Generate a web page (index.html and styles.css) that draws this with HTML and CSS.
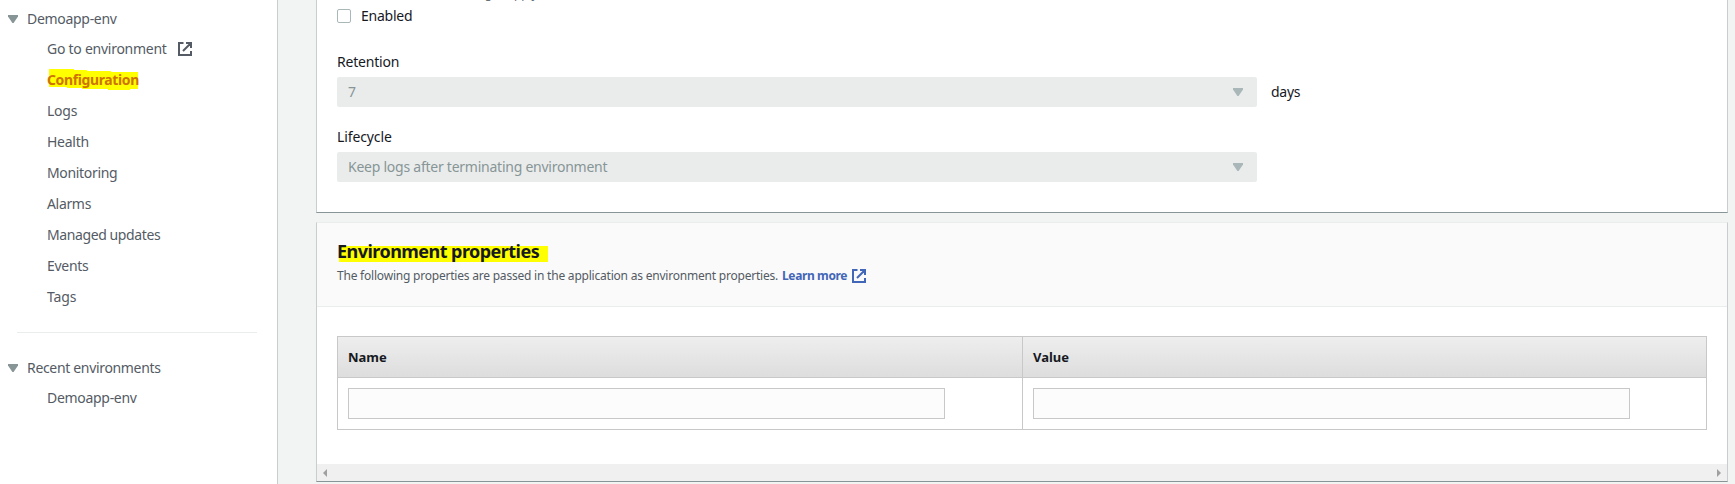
FILE: index.html
```html
<!DOCTYPE html>
<html lang="en">
<head>
<meta charset="utf-8">
<title>Configuration</title>
<link rel="stylesheet" href="styles.css">
</head>
<body>
<div class="app">
  <nav class="sidebar">
    <div class="group"><svg class="caret" viewBox="0 0 10 8"><path d="M0 0h10v1.500L5.600 8H4.400L0 1.500z"/></svg><span class="t-env">Demoapp-env</span></div>
    <ul class="links">
      <li><span class="t-goto">Go to environment</span><svg class="ext" viewBox="0 0 14 14"><path d="M5.500 1H1v12h12V9M8 1h5v5M13 1L5 9"/></svg></li>
      <li class="active"><svg class="marker" viewBox="0 0 89 21"><path d="M0 0h25v1h13v1h24v1h27v17h-8v1H59v-1H33v-1H18v-1H0z"/></svg><span class="t-conf">Configuration</span></li>
      <li><span class="t-logs">Logs</span></li>
      <li><span class="t-health">Health</span></li>
      <li><span class="t-mon">Monitoring</span></li>
      <li><span class="t-alarms">Alarms</span></li>
      <li><span class="t-managed">Managed updates</span></li>
      <li><span class="t-events">Events</span></li>
      <li><span class="t-tags">Tags</span></li>
    </ul>
    <div class="divider"></div>
    <div class="group recent"><svg class="caret" viewBox="0 0 10 8"><path d="M0 0h10v1.500L5.600 8H4.400L0 1.500z"/></svg><span class="t-recent">Recent environments</span></div>
    <ul class="links recent-links"><li><span class="t-env">Demoapp-env</span></li></ul>
  </nav>
  <main class="content">
    <section class="card logs">
      <div class="hint"><span class="t-hint">Standard CloudWatch charges apply.</span></div>
      <label class="check"><span class="box"></span><span class="t-enabled">Enabled</span></label>
      <div class="label"><span class="t-ret">Retention</span></div>
      <div class="row">
        <div class="select"><span>7</span><svg class="caret" viewBox="0 0 10 8"><path d="M0 0h10v1.500L5.600 8H4.400L0 1.500z"/></svg></div>
        <span class="t-days">days</span>
      </div>
      <div class="label second"><span class="t-life">Lifecycle</span></div>
      <div class="row">
        <div class="select"><span class="t-keep">Keep logs after terminating environment</span><svg class="caret" viewBox="0 0 10 8"><path d="M0 0h10v1.500L5.600 8H4.400L0 1.500z"/></svg></div>
      </div>
    </section>
    <section class="card props">
      <header class="head">
        <h2><span class="t-title">Environment properties</span></h2>
        <p><span class="t-desc">The following properties are passed in the application as environment properties.</span><a class="t-learn">Learn more</a><svg class="ext" viewBox="0 0 14 14"><path d="M5.500 1H1v12h12V9M8 1h5v5M13 1L5 9"/></svg></p>
      </header>
      <div class="table">
        <div class="th"><span class="t-name">Name</span></div>
        <div class="th"><span class="t-value">Value</span></div>
        <div class="td"><input class="field" type="text"></div>
        <div class="td"><input class="field" type="text"></div>
      </div>
      <div class="scroll">
        <svg viewBox="0 0 4 8"><path d="M4 0v8L0 4z"/></svg>
        <svg viewBox="0 0 4 8"><path d="M0 0v8l4-4z"/></svg>
      </div>
    </section>
  </main>
</div>
</body>
</html>
```
FILE: styles.css
```css
* { box-sizing: border-box; }
body {
  margin: 0;
  height: 484px;
  overflow: hidden;
  background: #f2f3f3;
  color: #16191f;
  font: 14px/20px "Noto Sans", "Open Sans", sans-serif;
  white-space: nowrap;
}
.app { display: flex; height: 484px; }
.sidebar {
  width: 278px;
  flex: none;
  padding-top: 9px;
  background: #fff;
  border-right: 1px solid #c8cdce;
  color: #545b64;
}
.group { display: flex; align-items: center; height: 20px; padding-left: 8px; gap: 9px; }
.caret { width: 10px; height: 8px; flex: none; fill: #879596; }
.links { list-style: none; margin: 4px 0 0; padding: 0 0 0 47px; }
.links li { position: relative; display: flex; align-items: center; height: 31px; }
.ext { width: 14px; height: 14px; flex: none; fill: none; stroke: #545b64; stroke-width: 2; }
.links .ext { margin-left: 11px; }
.active { color: #cf7300; font-weight: 700; }
.active span { position: relative; }
.marker { position: absolute; left: 2px; top: 5px; width: 89px; height: 21px; fill: #ff0; }
.divider { height: 1px; width: 240px; margin: 20px 0 0 17px; background: #eaeded; }
.recent { margin-top: 25px; }
.recent-links { margin-top: 4px; }

.content { flex: 1; padding-left: 38px; }
.card {
  width: 1412px;
  background: #fff;
  border: 1px solid #c8cdce;
  border-bottom-color: #879596;
}
.logs { height: 213px; border-top: 0; padding-left: 20px; overflow: hidden; }
.hint { height: 3px; padding-bottom: 1px; color: #687078; font-size: 12px; line-height: 16px; display: flex; align-items: flex-end; }
.check { display: flex; align-items: center; height: 26px; gap: 10px; }
.box { width: 14px; height: 14px; border: 1px solid #aab7b8; border-radius: 2px; }
.label { height: 20px; margin-top: 23px; }
.label.second { margin-top: 20px; }
.row { display: flex; align-items: center; gap: 14px; margin-top: 5px; }
.select {
  display: flex;
  align-items: center;
  justify-content: space-between;
  width: 920px;
  height: 30px;
  padding: 0 14px 0 11px;
  border-radius: 2px;
  background: #eaecec;
  color: #879596;
}
.select .caret { fill: #aab7b8; }
.props { margin-top: 9px; height: 260px; border-top-color: #eaeded; }
.head { height: 84px; padding: 17px 0 0 20px; background: #fafafa; border-bottom: 1px solid #eaeded; }
h2 { display: flex; align-items: center; margin: 0; width: 212px; height: 22px; font-size: 18px; line-height: 22px; font-weight: 700; background: linear-gradient(#ff0, #ff0) 2px 6px / 209px 16px no-repeat; }
.head p { display: flex; align-items: center; height: 18px; margin: 5px 0 0; color: #545b64; font-size: 12px; }
.head a { margin-left: 4px; color: #4266b8; font-weight: 700; }
.head .ext { margin-left: 5px; stroke: #4266b8; }
.table {
  display: grid;
  grid-template-columns: 685px 684px;
  grid-template-rows: 41px 52px;
  width: 1370px;
  margin: 29px 0 0 20px;
  border: 1px solid #c8c8c8;
  border-width: 1px 0 0 1px;
}
.th, .td { display: flex; align-items: center; padding-left: 10px; border: 1px solid #c8c8c8; border-width: 0 1px 1px 0; }
.th { background: linear-gradient(#eee, #ddd); font-weight: 700; font-size: 13px; }
.td { background: #fff; }
.field { width: 597px; height: 31px; padding: 0; border: 1px solid #c8c8c8; background: #fcfcfc; }
.scroll { display: flex; align-items: center; justify-content: space-between; height: 17px; margin-top: 34px; padding: 0 6px; background: #f0f0f0; }
.scroll svg { width: 4px; height: 8px; fill: #a0a0a0; }

/* tracking per label */
.t-env { letter-spacing: -.3px; }
.t-goto { letter-spacing: -.26px; }
.t-conf { letter-spacing: -.38px; }
.t-logs, .t-health, .t-enabled { letter-spacing: -.25px; }
.t-mon, .t-alarms, .t-recent { letter-spacing: -.33px; }
.t-managed { letter-spacing: -.4px; }
.t-events, .t-days { letter-spacing: -.28px; }
.t-tags, .t-life { letter-spacing: -.12px; }
.t-ret { letter-spacing: -.2px; }
.t-desc { letter-spacing: -.213px; }
.t-hint { letter-spacing: -.1px; }
.t-keep { letter-spacing: -.245px; }
.t-title { letter-spacing: -.54px; }
.t-learn { letter-spacing: -.38px; }
.t-name, .t-value { letter-spacing: 0; }
```
